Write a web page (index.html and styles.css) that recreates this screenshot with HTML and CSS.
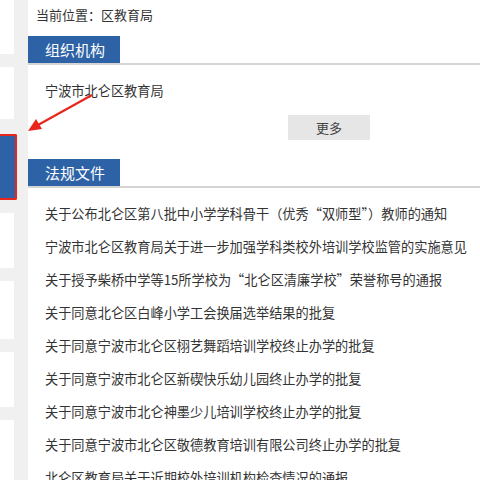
FILE: index.html
```html
<!DOCTYPE html>
<html lang="zh-CN">
<head>
    <meta charset="UTF-8">
    <title>区教育局</title>
    <link rel="stylesheet" href="styles.css">
</head>
<body>
<div class="page">
    <div class="side">
        <div class="side--item" style="height:54px"></div>
        <div class="side--item" style="height:52px"></div>
        <div class="side--item active"></div>
        <div class="side--item" style="height:55px"></div>
        <div class="side--item" style="height:58px"></div>
        <div class="side--item" style="height:55px"></div>
        <div class="side--item" style="height:62px"></div>
    </div>

    <div class="main">
        <div class="crumb">当前位置：区教育局</div>

        <div class="box">
            <div class="box--head"><span>组织机构</span></div>
            <div class="box--body">
                <p class="org">宁波市北仑区教育局</p>
                <div class="more-wrap"><a class="more" href="#">更多</a></div>
            </div>
        </div>

        <div class="box">
            <div class="box--head"><span>法规文件</span></div>
            <ul class="list">
                <li>关于公布北仑区第八批中小学学科骨干（优秀“双师型”）教师的通知</li>
                <li>宁波市北仑区教育局关于进一步加强学科类校外培训学校监管的实施意见</li>
                <li>关于授予柴桥中学等15所学校为“北仑区清廉学校”荣誉称号的通报</li>
                <li>关于同意北仑区白峰小学工会换届选举结果的批复</li>
                <li>关于同意宁波市北仑区栩艺舞蹈培训学校终止办学的批复</li>
                <li>关于同意宁波市北仑区新碶快乐幼儿园终止办学的批复</li>
                <li>关于同意宁波市北仑神墨少儿培训学校终止办学的批复</li>
                <li>关于同意宁波市北仑区敬德教育培训有限公司终止办学的批复</li>
                <li>北仑区教育局关于近期校外培训机构检查情况的通报</li>
            </ul>
        </div>

        <!-- 标注箭头 -->
        <svg class="arrow" width="80" height="50" viewBox="0 0 80 50">
            <line x1="64" y1="7" x2="10" y2="37" stroke="#e8261c" stroke-width="2.2"/>
            <polygon points="0,43 8,31 14,41" fill="#e8261c"/>
        </svg>
    </div>
</div>
</body>
</html>
```

FILE: styles.css
```css
* {
    box-sizing: border-box;
    margin: 0;
    padding: 0;
}

body {
    background: #f0f0f0;
    font-family: "Microsoft YaHei", "Noto Sans CJK SC", sans-serif;
    color: #333;
    overflow: hidden;
}

.page {
    display: flex;
    gap: 14px;
    height: 480px;
}

.side {
    width: 14px;
    display: flex;
    flex-direction: column;
    gap: 13px;
}

.side--item {
    background: #fff;
    flex-shrink: 0;
}

.side--item.active {
    height: 66px;
    background: #2d63a6;
    border: 2px solid #e8261c;
    border-left: 0;
    width: 17px;
    border-radius: 0 2px 2px 0;
    margin-top: 2px;
}

.main {
    flex: 1;
    background: #fff;
    position: relative;
    padding-top: 5px;
}

.crumb {
    font-size: 13px;
    line-height: 20px;
    padding-left: 8px;
    color: #333;
}

.box {
    margin-top: 11px;
}

.box + .box {
    margin-top: 19px;
}

.box--head {
    border-bottom: 2px solid #d4d4d4;
    height: 29px;
}

.box--head span {
    display: inline-block;
    width: 92px;
    height: 27px;
    line-height: 27px;
    background: #2d63a6;
    color: #fff;
    font-size: 15px;
    padding-left: 17px;
}

.box--body {
    padding: 16px 0 0 17px;
}

.org {
    font-size: 13.2px;
    line-height: 20px;
}

.more-wrap {
    padding: 14px 0 0 243px;
}

.more {
    display: block;
    width: 82px;
    height: 25px;
    line-height: 25px;
    background: #e6e6e6;
    color: #444;
    text-align: center;
    font-size: 13px;
    text-decoration: none;
}

.list {
    list-style: none;
    padding: 16px 0 0 17px;
}

.list li {
    font-size: 13.2px;
    line-height: 20px;
    height: 33px;
    white-space: nowrap;
    color: #333;
}

.arrow {
    position: absolute;
    left: 0;
    top: 88px;
}
```
